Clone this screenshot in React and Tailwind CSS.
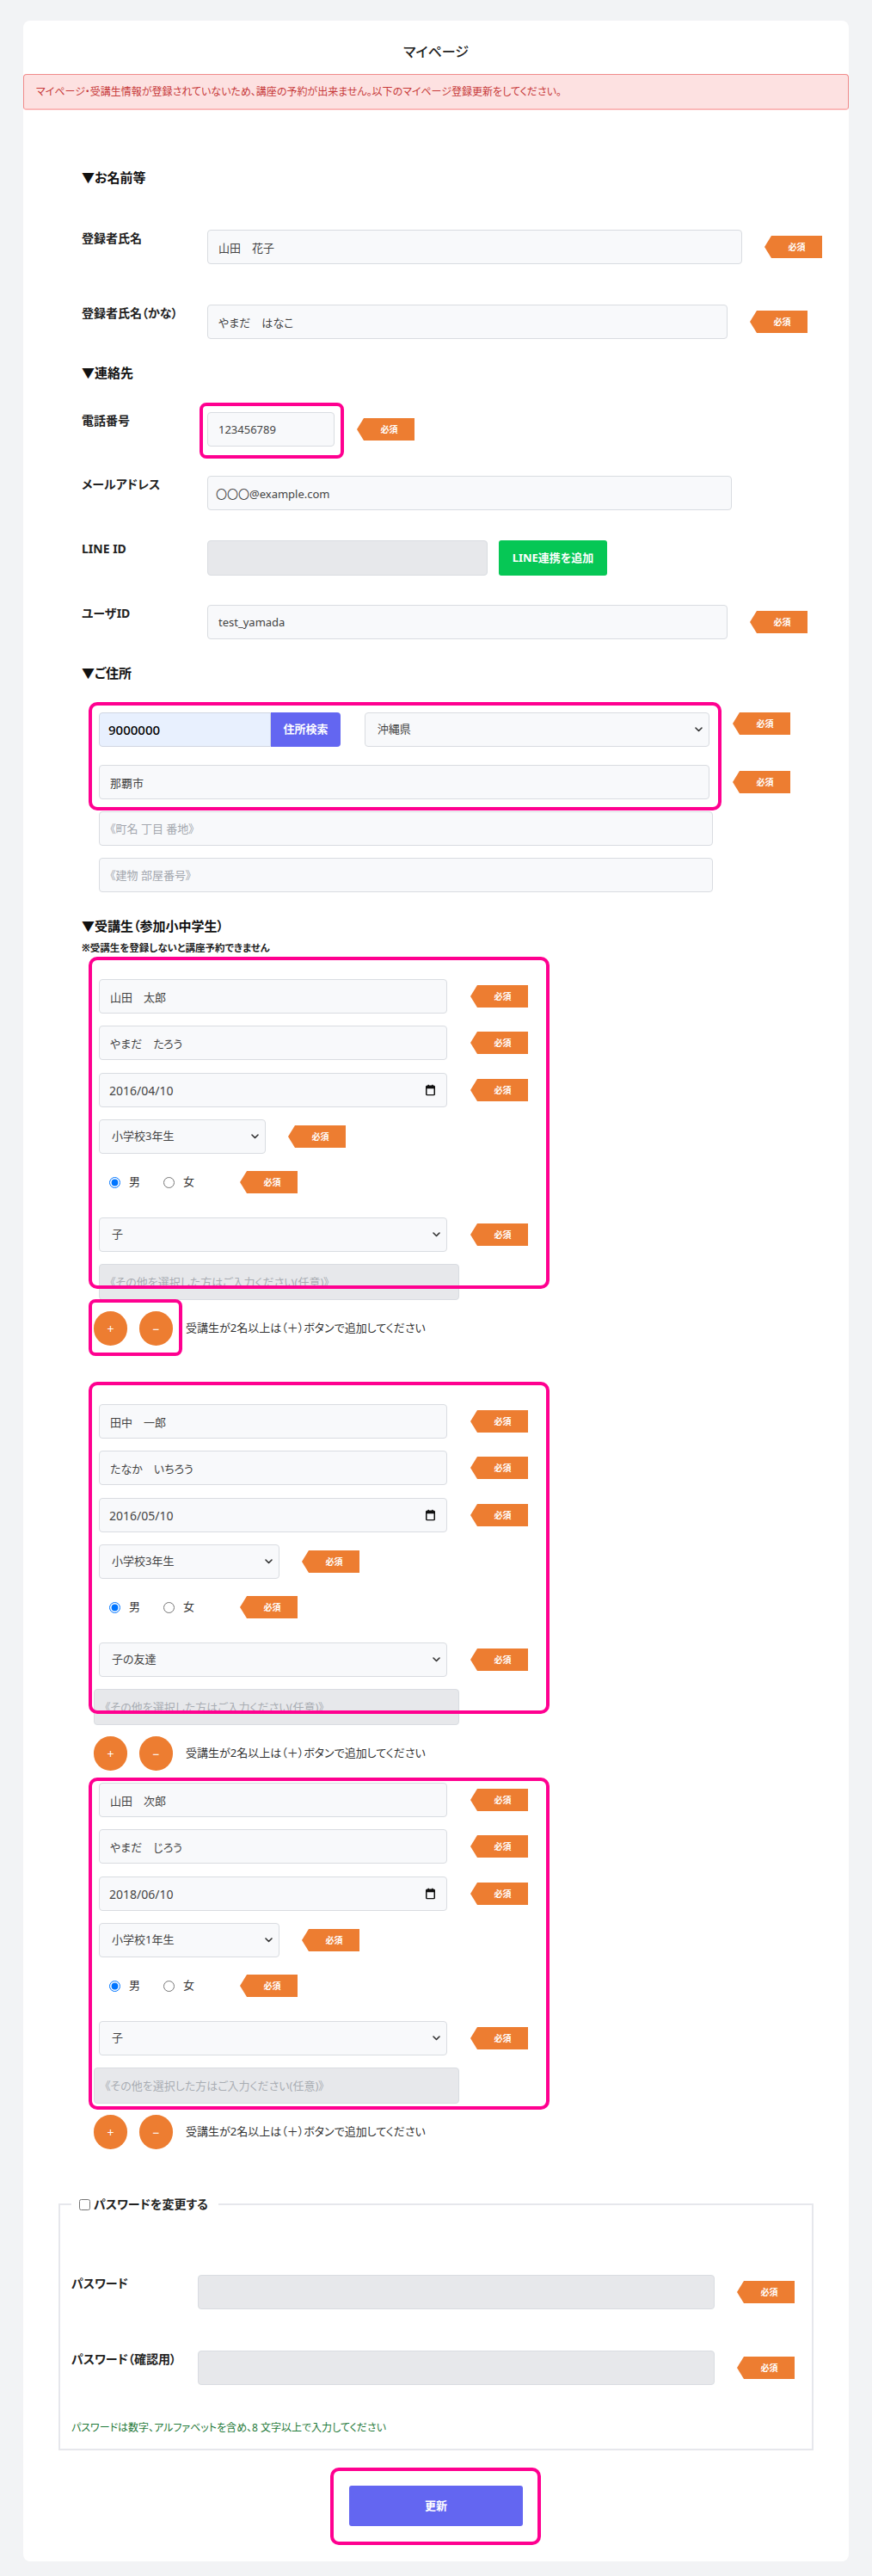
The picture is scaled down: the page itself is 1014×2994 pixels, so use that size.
import React from "react";

const inputBase =
  "h-10 rounded-[4px] border border-[#d9dce1] bg-[#f8f9fb] px-3 text-[13px] text-[#444] outline-none placeholder:text-[#a3a7ae]";
const disabledBase =
  "rounded-[4px] border border-[#d9dce1] bg-[#e7e8eb] px-3 text-[13px] outline-none placeholder:text-[#a9adb3]";

const Badge = ({ className = "" }) => (
  <span
    className={`inline-flex h-[26px] w-[67px] shrink-0 items-center justify-center pl-[8px] bg-[#ed7d31] text-[10px] font-bold text-white [clip-path:polygon(8px_0,100%_0,100%_100%,8px_100%,0_50%)] ${className}`}
  >
    必須
  </span>
);

const Chevron = () => (
  <svg
    className="pointer-events-none absolute right-[8px] top-1/2 -translate-y-1/2"
    width="9"
    height="6"
    viewBox="0 0 9 6"
    fill="none"
  >
    <path d="M1 1l3.5 3.5L8 1" stroke="#333" strokeWidth="1.6" strokeLinecap="round" strokeLinejoin="round" />
  </svg>
);

const Select = ({ value, options, width, className = "" }) => (
  <div className={`relative ${width} ${className}`}>
    <select
      defaultValue={value}
      className="h-10 w-full appearance-none rounded-[4px] border border-[#d9dce1] bg-[#f8f9fb] pl-[14px] pr-6 text-[13px] text-[#444] outline-none"
    >
      {options.map((o) => (
        <option key={o}>{o}</option>
      ))}
    </select>
    <Chevron />
  </div>
);

const CalendarIcon = () => (
  <svg
    className="pointer-events-none absolute right-[14px] top-1/2 -translate-y-1/2"
    width="11"
    height="13"
    viewBox="0 0 11 13"
  >
    <rect x="0.75" y="1.75" width="9.5" height="10.5" rx="1" fill="none" stroke="#111" strokeWidth="1.5" />
    <rect x="0.75" y="1.75" width="9.5" height="3" fill="#111" />
    <rect x="2.5" y="0" width="1.5" height="3" fill="#111" />
    <rect x="7" y="0" width="1.5" height="3" fill="#111" />
  </svg>
);

const Row = ({ label, children, className = "", labelWidth = "w-[146px]" }) => (
  <div className={`flex items-start ${className}`}>
    <div className={`${labelWidth} shrink-0 text-[14px] font-bold leading-5 text-[#222]`}>{label}</div>
    <div className="flex items-center gap-[26px]">{children}</div>
  </div>
);

const Heading = ({ children, className = "" }) => (
  <h3 className={`text-[15px] font-bold leading-5 text-[#111] ${className}`}>{children}</h3>
);

const PlusMinus = ({ boxed }) => (
  <div className="relative -ml-[6px] mt-[13px] flex items-center">
    {boxed && (
      <div className="pointer-events-none absolute -left-[6px] -top-[14px] z-10 h-[66px] w-[109px] rounded-[8px] border-[4px] border-[#ff0090]" />
    )}
    <button className="flex h-[40px] w-[39px] items-center justify-center rounded-full bg-[#ed7d31] text-[14px] text-white">
      +
    </button>
    <button className="ml-[14px] flex h-[40px] w-[39px] items-center justify-center rounded-full bg-[#ed7d31] text-[14px] text-white">
      −
    </button>
    <span className="ml-[15px] text-[13px] text-[#333]">受講生が2名以上は（＋）ボタンで追加してください</span>
  </div>
);

const StudentGroup = ({ s, boxTop, btnBox, otherShift, gradeWidth, className = "" }) => (
  <div className={`relative pl-[20px] ${className}`}>
    <div
      className="pointer-events-none absolute left-[8px] z-10 h-[386px] w-[536px] rounded-[10px] border-[4px] border-[#ff0090]"
      style={{ top: boxTop }}
    />
    <div className="flex items-center gap-[27px]">
      <input className={`${inputBase} w-[405px]`} defaultValue={s.name} />
      <Badge />
    </div>
    <div className="mt-[14px] flex items-center gap-[27px]">
      <input className={`${inputBase} w-[405px]`} defaultValue={s.kana} />
      <Badge />
    </div>
    <div className="mt-[15px] flex items-center gap-[27px]">
      <div className="relative w-[405px]">
        <input className={`${inputBase} w-full pl-[11px] text-[14px] text-[#111]`} defaultValue={s.birth} />
        <CalendarIcon />
      </div>
      <Badge />
    </div>
    <div className="mt-[14px] flex items-center gap-[26px]">
      <Select value={s.grade} options={["小学校1年生", "小学校2年生", "小学校3年生"]} width={gradeWidth} />
      <Badge />
    </div>
    <div className="mt-[20px] flex h-[26px] items-center pl-[12px]">
      <input type="radio" name={`sex-${s.name}`} defaultChecked className="m-0 h-[13px] w-[13px]" />
      <span className="ml-[10px] text-[13px] text-[#333]">男</span>
      <input type="radio" name={`sex-${s.name}`} className="m-0 ml-[27px] h-[13px] w-[13px]" />
      <span className="ml-[10px] text-[13px] text-[#333]">女</span>
      <Badge className="ml-[53px]" />
    </div>
    <div className="mt-[28px] flex items-center gap-[27px]">
      <Select value={s.relation} options={["子", "子の友達", "その他"]} width="w-[405px]" />
      <Badge />
    </div>
    <input
      disabled
      className={`${disabledBase} mt-[14px] block h-[42px] ${otherShift ? "-ml-[6px] w-[425px]" : "w-[419px]"}`}
      placeholder="《その他を選択した方はご入力ください(任意)》"
    />
    <PlusMinus boxed={btnBox} />
  </div>
);

const students = [
  { name: "山田　太郎", kana: "やまだ　たろう", birth: "2016/04/10", grade: "小学校3年生", relation: "子" },
  { name: "田中　一郎", kana: "たなか　いちろう", birth: "2016/05/10", grade: "小学校3年生", relation: "子の友達" },
  { name: "山田　次郎", kana: "やまだ　じろう", birth: "2018/06/10", grade: "小学校1年生", relation: "子" },
];

export default function App() {
  return (
    <div className="min-h-screen bg-[#f2f3f5] px-[27px] pb-[18px] pt-[24px] font-['Noto_Sans','Noto_Sans_CJK_JP',sans-serif] [font-feature-settings:'palt']">
      <div className="rounded-lg bg-white pb-[41px]">
        <h1 className="pt-6 text-center text-[16px] font-medium leading-6 text-[#222]">マイページ</h1>

        <div className="mt-[14px] flex h-[42px] items-center rounded-[4px] border border-[#f08a8a] border-b-2 border-b-[#fbb9b9] bg-[#fde1e1] px-[14px] text-[12px] text-[#c73a3a]">
          マイページ・受講生情報が登録されていないため、講座の予約が出来ません。以下のマイページ登録更新をしてください。
        </div>

        <div className="px-[68px]">
          <Heading className="mt-[68px]">▼お名前等</Heading>
          <Row label="登録者氏名" className="mt-[51px]">
            <input className={`${inputBase} w-[622px]`} defaultValue="山田　花子" />
            <Badge />
          </Row>
          <Row label="登録者氏名（かな）" className="mt-[47px]">
            <input className={`${inputBase} w-[605px]`} defaultValue="やまだ　はなこ" />
            <Badge />
          </Row>

          <Heading className="mt-[29px]">▼連絡先</Heading>
          <Row label="電話番号" className="mt-[36px]">
            <div className="relative">
              <div className="pointer-events-none absolute -left-[9px] -top-[11px] z-10 h-[65px] w-[168px] rounded-[8px] border-[4px] border-[#ff0090]" />
              <input className={`${inputBase} w-[148px]`} defaultValue="123456789" />
            </div>
            <Badge />
          </Row>
          <Row label="メールアドレス" className="mt-[34px]">
            <input className={`${inputBase} w-[610px] pl-[9px] text-[#222]`} defaultValue="〇〇〇@example.com" />
          </Row>
          <Row label="LINE ID" className="mt-[35px]">
            <div className="flex items-center gap-[13px]">
              <input disabled className={`${disabledBase} h-[41px] w-[326px]`} />
              <button className="h-[41px] w-[126px] rounded-[3px] bg-[#06c755] text-[13px] font-bold text-white">
                LINE連携を追加
              </button>
            </div>
          </Row>
          <Row label="ユーザID" className="mt-[34px]">
            <input className={`${inputBase} w-[605px]`} defaultValue="test_yamada" />
            <Badge />
          </Row>

          <Heading className="mt-[29px]">▼ご住所</Heading>
          <div className="relative mt-[36px] pl-[20px]">
            <div className="pointer-events-none absolute -top-[12px] left-[8px] z-10 h-[126px] w-[736px] rounded-[10px] border-[4px] border-[#ff0090]" />
            <div className="flex items-start">
              <input
                className="h-10 w-[200px] rounded-l-[4px] border border-[#d0d6e2] bg-[#e8f0fe] px-[10px] text-[15px] font-medium text-black outline-none"
                defaultValue="9000000"
              />
              <button className="h-10 w-[81px] rounded-r-[4px] bg-[#6366f1] text-[13px] font-bold text-white">住所検索</button>
              <Select value="沖縄県" options={["北海道", "東京都", "沖縄県"]} width="w-[402px]" className="ml-[28px]" />
              <Badge className="ml-[27px]" />
            </div>
            <div className="mt-[21px] flex items-center gap-[27px]">
              <input className={`${inputBase} w-[714px]`} defaultValue="那覇市" />
              <Badge />
            </div>
            <input className={`${inputBase} mt-[14px] block w-[714px]`} placeholder="《町名 丁目 番地》" />
            <input className={`${inputBase} mt-[14px] block w-[714px]`} placeholder="《建物 部屋番号》" />
          </div>

          <Heading className="mt-[29px]">▼受講生（参加小中学生）</Heading>
          <p className="mt-[8px] text-[11.5px] font-bold leading-4 text-[#222]">※受講生を登録しないと講座予約できません</p>

          <StudentGroup s={students[0]} boxTop={-26} btnBox gradeWidth="w-[194px]" className="mt-[28px]" />
          <StudentGroup s={students[1]} boxTop={-26} otherShift gradeWidth="w-[210px]" className="mt-[68px]" />
          <StudentGroup s={students[2]} boxTop={-6} otherShift gradeWidth="w-[210px]" className="mt-[14px]" />
        </div>

        <div className="mt-[54px] px-[41px]">
          <fieldset className="border-2 border-[#e6e7ec] px-[13px] pb-[16px]">
            <legend className="flex items-center pl-[9px] pr-[12px] text-[14px] font-semibold leading-5 text-[#222]">
              <input type="checkbox" className="m-0 h-[13px] w-[13px]" />
              <span className="ml-[4px]">パスワードを変更する</span>
            </legend>
            <Row label="パスワード" labelWidth="w-[147px]" className="mt-[72px]">
              <input disabled type="password" className={`${disabledBase} h-10 w-[601px]`} />
              <Badge />
            </Row>
            <Row label="パスワード（確認用）" labelWidth="w-[147px]" className="mt-[48px]">
              <input disabled type="password" className={`${disabledBase} h-10 w-[601px]`} />
              <Badge />
            </Row>
            <p className="mt-[42px] text-[12px] leading-4 text-[#1f7a3a]">
              パスワードは数字、アルファベットを含め、8 文字以上で入力してください
            </p>
          </fieldset>
        </div>

        <div className="mt-[41px] flex justify-center">
          <div className="relative">
            <div className="pointer-events-none absolute -left-[22px] -top-[21px] z-10 h-[90px] w-[245px] rounded-[10px] border-[4px] border-[#ff0090]" />
            <button className="h-[47px] w-[202px] rounded-[3px] bg-[#6366f1] text-[13px] font-bold text-white">更新</button>
          </div>
        </div>
      </div>
    </div>
  );
}
